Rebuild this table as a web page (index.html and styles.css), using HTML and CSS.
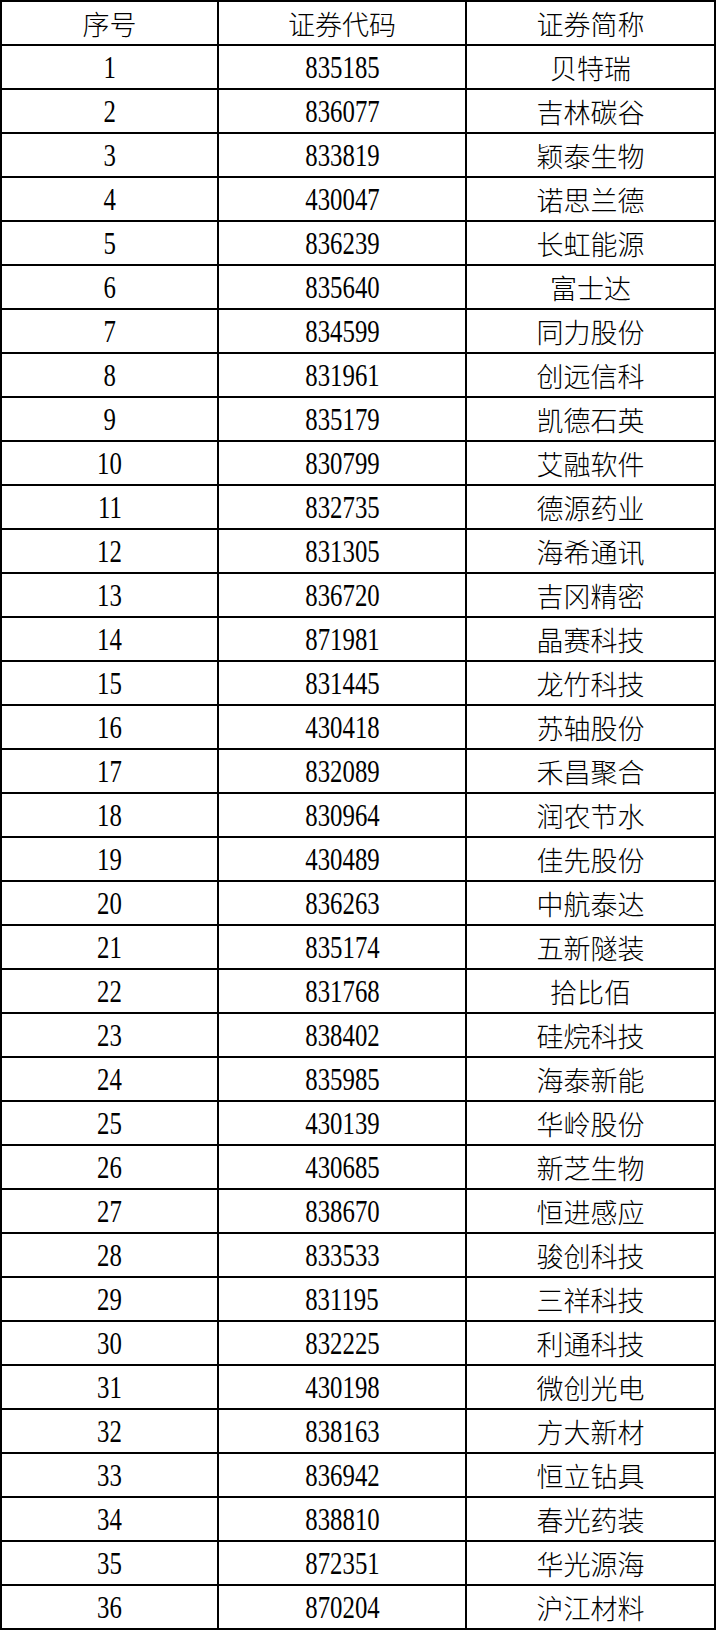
FILE: index.html
```html
<!DOCTYPE html>
<html lang="zh-CN">
<head>
<meta charset="utf-8">
<title>证券列表</title>
<link rel="stylesheet" href="styles.css">
</head>
<body>
<table class="sec-table">
<colgroup><col class="c1"><col class="c2"><col class="c3"></colgroup>
<thead>
<tr><th>序号</th><th>证券代码</th><th>证券简称</th></tr>
</thead>
<tbody>
<tr><td class="num"><span>1</span></td><td class="num"><span>835185</span></td><td class="name">贝特瑞</td></tr>
<tr><td class="num"><span>2</span></td><td class="num"><span>836077</span></td><td class="name">吉林碳谷</td></tr>
<tr><td class="num"><span>3</span></td><td class="num"><span>833819</span></td><td class="name">颖泰生物</td></tr>
<tr><td class="num"><span>4</span></td><td class="num"><span>430047</span></td><td class="name">诺思兰德</td></tr>
<tr><td class="num"><span>5</span></td><td class="num"><span>836239</span></td><td class="name">长虹能源</td></tr>
<tr><td class="num"><span>6</span></td><td class="num"><span>835640</span></td><td class="name">富士达</td></tr>
<tr><td class="num"><span>7</span></td><td class="num"><span>834599</span></td><td class="name">同力股份</td></tr>
<tr><td class="num"><span>8</span></td><td class="num"><span>831961</span></td><td class="name">创远信科</td></tr>
<tr><td class="num"><span>9</span></td><td class="num"><span>835179</span></td><td class="name">凯德石英</td></tr>
<tr><td class="num"><span>10</span></td><td class="num"><span>830799</span></td><td class="name">艾融软件</td></tr>
<tr><td class="num"><span>11</span></td><td class="num"><span>832735</span></td><td class="name">德源药业</td></tr>
<tr><td class="num"><span>12</span></td><td class="num"><span>831305</span></td><td class="name">海希通讯</td></tr>
<tr><td class="num"><span>13</span></td><td class="num"><span>836720</span></td><td class="name">吉冈精密</td></tr>
<tr><td class="num"><span>14</span></td><td class="num"><span>871981</span></td><td class="name">晶赛科技</td></tr>
<tr><td class="num"><span>15</span></td><td class="num"><span>831445</span></td><td class="name">龙竹科技</td></tr>
<tr><td class="num"><span>16</span></td><td class="num"><span>430418</span></td><td class="name">苏轴股份</td></tr>
<tr><td class="num"><span>17</span></td><td class="num"><span>832089</span></td><td class="name">禾昌聚合</td></tr>
<tr><td class="num"><span>18</span></td><td class="num"><span>830964</span></td><td class="name">润农节水</td></tr>
<tr><td class="num"><span>19</span></td><td class="num"><span>430489</span></td><td class="name">佳先股份</td></tr>
<tr><td class="num"><span>20</span></td><td class="num"><span>836263</span></td><td class="name">中航泰达</td></tr>
<tr><td class="num"><span>21</span></td><td class="num"><span>835174</span></td><td class="name">五新隧装</td></tr>
<tr><td class="num"><span>22</span></td><td class="num"><span>831768</span></td><td class="name">拾比佰</td></tr>
<tr><td class="num"><span>23</span></td><td class="num"><span>838402</span></td><td class="name">硅烷科技</td></tr>
<tr><td class="num"><span>24</span></td><td class="num"><span>835985</span></td><td class="name">海泰新能</td></tr>
<tr><td class="num"><span>25</span></td><td class="num"><span>430139</span></td><td class="name">华岭股份</td></tr>
<tr><td class="num"><span>26</span></td><td class="num"><span>430685</span></td><td class="name">新芝生物</td></tr>
<tr><td class="num"><span>27</span></td><td class="num"><span>838670</span></td><td class="name">恒进感应</td></tr>
<tr><td class="num"><span>28</span></td><td class="num"><span>833533</span></td><td class="name">骏创科技</td></tr>
<tr><td class="num"><span>29</span></td><td class="num"><span>831195</span></td><td class="name">三祥科技</td></tr>
<tr><td class="num"><span>30</span></td><td class="num"><span>832225</span></td><td class="name">利通科技</td></tr>
<tr><td class="num"><span>31</span></td><td class="num"><span>430198</span></td><td class="name">微创光电</td></tr>
<tr><td class="num"><span>32</span></td><td class="num"><span>838163</span></td><td class="name">方大新材</td></tr>
<tr><td class="num"><span>33</span></td><td class="num"><span>836942</span></td><td class="name">恒立钻具</td></tr>
<tr><td class="num"><span>34</span></td><td class="num"><span>838810</span></td><td class="name">春光药装</td></tr>
<tr><td class="num"><span>35</span></td><td class="num"><span>872351</span></td><td class="name">华光源海</td></tr>
<tr><td class="num"><span>36</span></td><td class="num"><span>870204</span></td><td class="name">沪江材料</td></tr>
</tbody>
</table>
</body>
</html>
```
FILE: styles.css
```css
html, body {
  margin: 0;
  padding: 0;
  background: #ffffff;
}

.sec-table {
  width: 716px;
  table-layout: fixed;
  border-collapse: separate;
  border-spacing: 0;
  border-left: 2px solid #000;
  border-top: 2px solid #000;
  box-sizing: border-box;
  color: #000;
}

.c1 { width: 217px; }
.c2 { width: 248px; }
.c3 { width: 249px; }

.sec-table th,
.sec-table td {
  height: 44px;
  box-sizing: border-box;
  padding: 0;
  border-right: 2px solid #000;
  border-bottom: 2px solid #000;
  text-align: center;
  vertical-align: middle;
  font-family: "Noto Sans CJK SC", sans-serif;
  font-weight: 300;
  font-size: 27px;
  line-height: 1;
}

.sec-table td.num span {
  display: inline-block;
  font-family: "Liberation Serif", serif;
  font-weight: 400;
  font-size: 31px;
  line-height: 1;
  transform: scaleX(0.8);
}
```
